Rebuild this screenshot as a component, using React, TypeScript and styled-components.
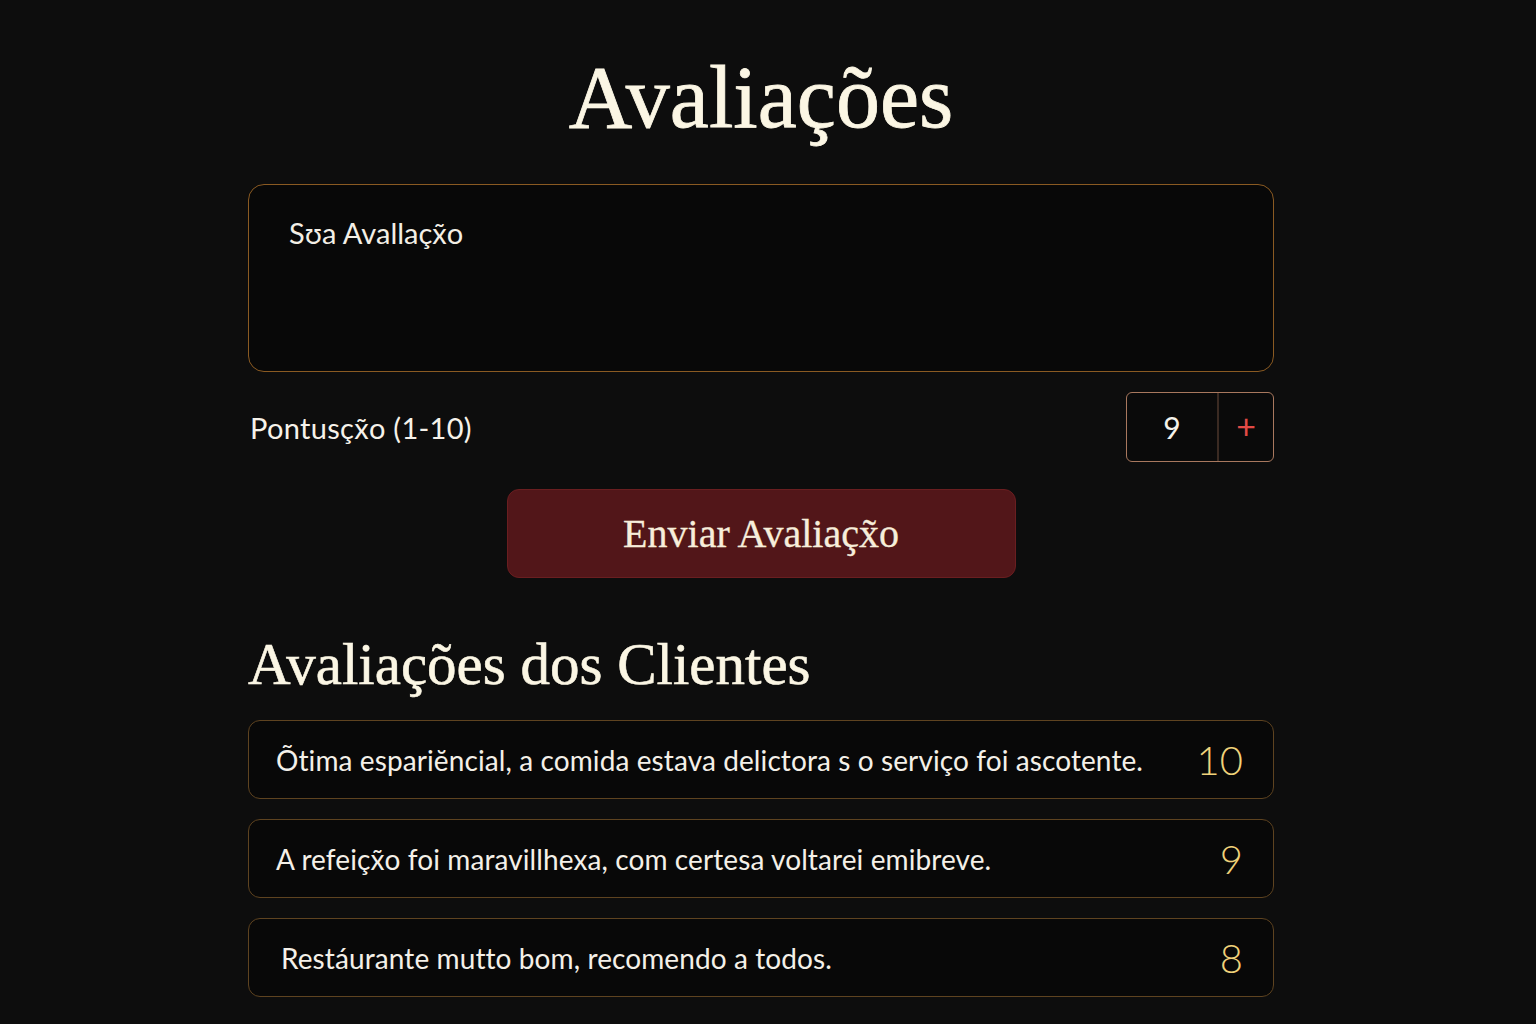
import styled, { createGlobalStyle } from "styled-components";

const serif = `"Liberation Serif", "DejaVu Serif", serif`;
const sans = `Lato, "Noto Sans", sans-serif`;

const GlobalStyle = createGlobalStyle`
    html, body {
        margin: 0;
        padding: 0;
        background: #0d0d0d;
    }
    body {
        font-family: ${sans};
        color: #f5f0e6;
    }
`;

const Page = styled.div`
    width: 1026px;
    margin: 0 0 0 248px;
    padding: 42px 0 28px 0;
    display: flex;
    flex-direction: column;
`;

const Title = styled.h1`
    margin: 0;
    font-family: ${serif};
    font-weight: 400;
    font-size: 88px;
    line-height: 112px;
    color: #fbf6e4;
    text-align: center;
    -webkit-text-stroke: 0.8px #fbf6e4;
`;

const ReviewInput = styled.div`
    margin-top: 30px;
    height: 188px;
    box-sizing: border-box;
    border: 1px solid #8a5a22;
    border-radius: 16px;
    background: #080808;
    padding: 30px 40px;
    font-size: 29px;
    color: #f3efe6;
`;

const ScoreRow = styled.div`
    margin-top: 20px;
    display: flex;
    align-items: center;
    justify-content: space-between;
`;

const ScoreLabel = styled.span`
    font-size: 29px;
    padding-left: 2px;
    letter-spacing: 0.3px;
    color: #f6f2ea;
`;

const Stepper = styled.div`
    width: 148px;
    height: 70px;
    box-sizing: border-box;
    border: 1px solid #a8785e;
    border-radius: 6px;
    background: #0a0a0a;
    display: flex;
    align-items: stretch;
    overflow: hidden;
`;

const StepValue = styled.div`
    width: 90px;
    display: flex;
    align-items: center;
    justify-content: center;
    font-size: 30px;
    color: #f5f2ea;
    border-right: 2px solid #3a2a22;
`;

const StepButton = styled.div`
    flex: 1;
    display: flex;
    align-items: center;
    justify-content: center;
    font-size: 34px;
    font-weight: 400;
    color: #e24a46;
    padding-bottom: 3px;
`;

const SubmitButton = styled.button`
    align-self: center;
    margin-top: 27px;
    width: 509px;
    height: 89px;
    border: 1px solid #6a1e20;
    border-radius: 12px;
    background: #521619;
    font-family: ${serif};
    font-size: 40px;
    color: #f7eedb;
    -webkit-text-stroke: 0.3px #f7eedb;
    cursor: pointer;
`;

const Subtitle = styled.h2`
    margin: 50px 0 0 0;
    font-family: ${serif};
    font-weight: 400;
    font-size: 59px;
    line-height: 72px;
    color: #fbf6e4;
    -webkit-text-stroke: 0.6px #fbf6e4;
`;

const ReviewList = styled.div`
    margin-top: 20px;
    display: flex;
    flex-direction: column;
    gap: 20px;
`;

const ReviewCard = styled.div<{ $inset: number }>`
    height: 79px;
    box-sizing: border-box;
    border: 1px solid #5e4320;
    border-radius: 12px;
    background: #080808;
    display: flex;
    align-items: center;
    justify-content: space-between;
    padding: 0 30px 0 ${({ $inset }) => $inset}px;
`;

const ReviewText = styled.span`
    font-size: 28px;
    letter-spacing: 0.1px;
    color: #f4f0e8;
`;

const ReviewScore = styled.span`
    font-size: 40px;
    font-weight: 300;
    color: #f0d27a;
`;

const reviews = [
    { text: "Õtima espariĕncial, a comida estava delictora s o serviço foi ascotente.", score: 10, inset: 27 },
    { text: "A refeiçx̃o foi maravillhexa, com certesa voltarei emibreve.", score: 9, inset: 27 },
    { text: "Restáurante mutto bom, recomendo a todos.", score: 8, inset: 32 },
];

export default function App() {
    return (
        <>
            <GlobalStyle />
            <Page>
                <Title>Avaliações</Title>
                <ReviewInput>Sʊa Avallaçx̃o</ReviewInput>
                <ScoreRow>
                    <ScoreLabel>Pontusçx̃o (1-10)</ScoreLabel>
                    <Stepper>
                        <StepValue>9</StepValue>
                        <StepButton>+</StepButton>
                    </Stepper>
                </ScoreRow>
                <SubmitButton>Enviar Avaliaçx̃o</SubmitButton>
                <Subtitle>Avaliações dos Clientes</Subtitle>
                <ReviewList>
                    {reviews.map((r) => (
                        <ReviewCard key={r.score} $inset={r.inset}>
                            <ReviewText>{r.text}</ReviewText>
                            <ReviewScore>{r.score}</ReviewScore>
                        </ReviewCard>
                    ))}
                </ReviewList>
            </Page>
        </>
    );
}
